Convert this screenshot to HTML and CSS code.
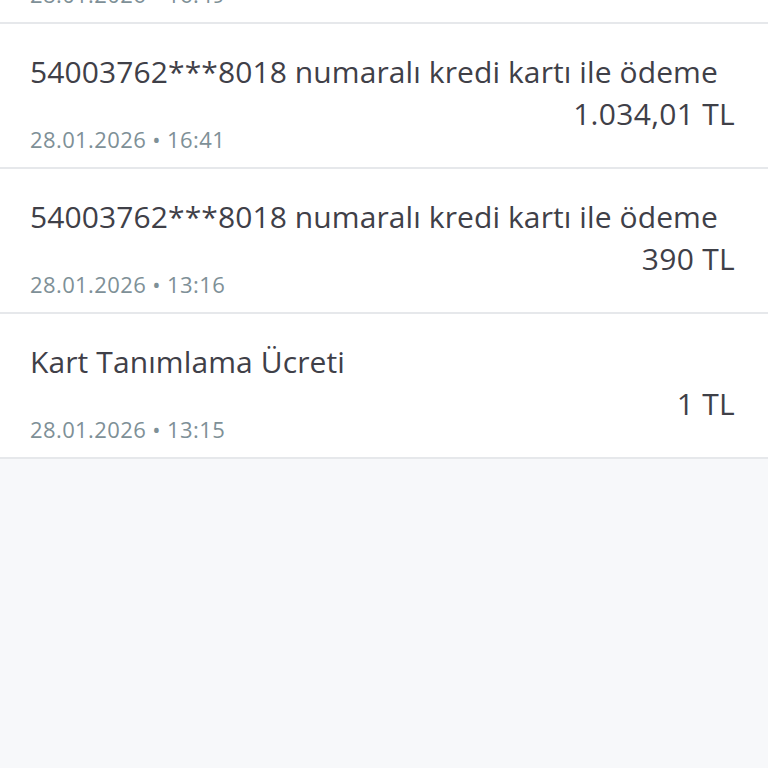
FILE: index.html
```html
<!DOCTYPE html>
<html lang="tr">
<head>
<meta charset="utf-8">
<title>İşlemler</title>
<link rel="stylesheet" href="styles.css">
</head>
<body>
<ul class="list">
  <li class="item">
    <div class="title">54003762***8018 numaralı kredi kartı ile ödeme</div>
    <div class="amount">120 TL</div>
    <div class="date">28.01.2026 • 16:49</div>
  </li>
  <li class="item">
    <div class="title">54003762***8018 numaralı kredi kartı ile ödeme</div>
    <div class="amount">1.034,01 TL</div>
    <div class="date">28.01.2026 • 16:41</div>
  </li>
  <li class="item">
    <div class="title">54003762***8018 numaralı kredi kartı ile ödeme</div>
    <div class="amount">390 TL</div>
    <div class="date">28.01.2026 • 13:16</div>
  </li>
  <li class="item">
    <div class="title">Kart Tanımlama Ücreti</div>
    <div class="amount">1 TL</div>
    <div class="date">28.01.2026 • 13:15</div>
  </li>
</ul>
</body>
</html>
```
FILE: styles.css
```css
html, body {
  margin: 0;
  padding: 0;
  background: #f7f8fa;
  font-family: "Open Sans", "Noto Sans", sans-serif;
}
.list {
  list-style: none;
  margin: -121px 0 0 0;
  padding: 0;
}
.item {
  background: #ffffff;
  border-bottom: 2px solid #e6e8eb;
  height: 143px;
  padding: 0 33px 0 30px;
  display: flex;
  flex-direction: column;
  box-sizing: content-box;
}
.title {
  color: #3f4048;
  font-size: 30px;
  line-height: 40px;
  margin-top: 28px;
  white-space: nowrap;
  letter-spacing: 0.1px;
}
.amount {
  color: #3f4048;
  font-size: 30px;
  line-height: 40px;
  text-align: right;
  margin-top: 2px;
  letter-spacing: 0.3px;
}
.date {
  color: #7e9097;
  font-size: 22px;
  line-height: 24px;
  margin-top: -7px;
  letter-spacing: 0.4px;
}
```
